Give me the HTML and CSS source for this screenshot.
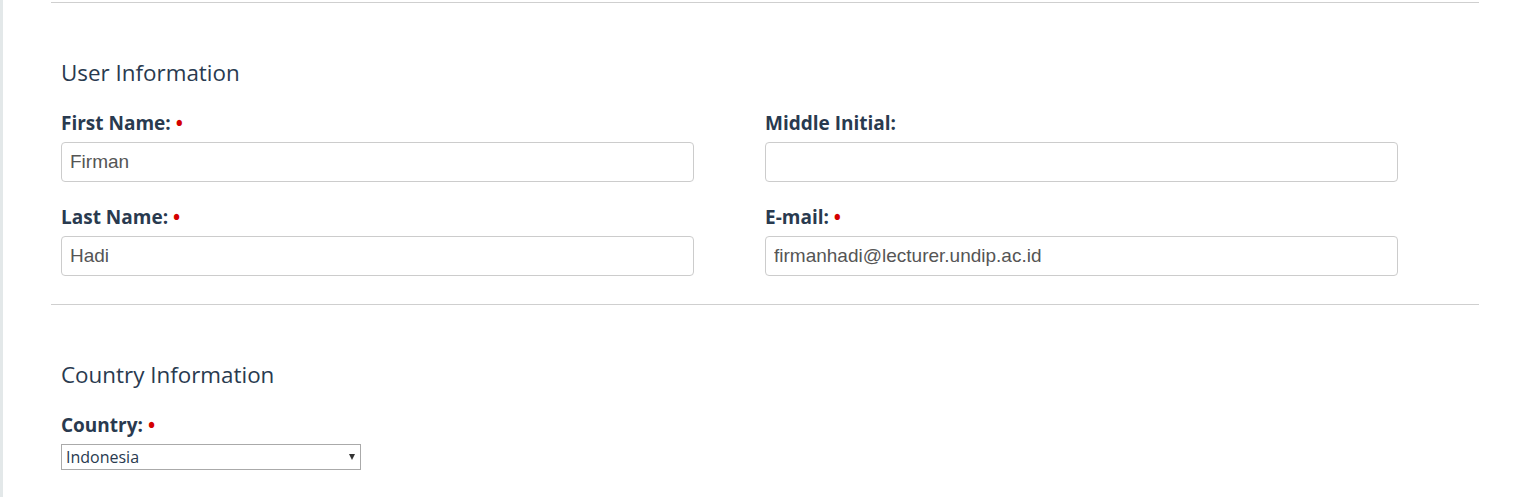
FILE: index.html
```html
<!DOCTYPE html>
<html lang="en">
<head>
<meta charset="utf-8">
<title>User Information</title>
<link rel="stylesheet" href="styles.css">
</head>
<body>
<div class="page">
  <div class="content">
    <section class="panel">
      <h2 class="panel-title">User Information</h2>
      <div class="grid">
        <div class="field">
          <label class="label">First Name: <span class="req">•</span></label>
          <input class="text" type="text" value="Firman">
        </div>
        <div class="field">
          <label class="label">Middle Initial:</label>
          <input class="text" type="text" value="">
        </div>
        <div class="field">
          <label class="label">Last Name: <span class="req">•</span></label>
          <input class="text" type="text" value="Hadi">
        </div>
        <div class="field">
          <label class="label">E-mail: <span class="req">•</span></label>
          <input class="text" type="text" value="firmanhadi@lecturer.undip.ac.id">
        </div>
      </div>
    </section>
    <section class="panel">
      <h2 class="panel-title">Country Information</h2>
      <div class="field">
        <label class="label">Country: <span class="req">•</span></label>
        <div class="select-wrap">
          <select class="select">
            <option>Indonesia</option>
          </select>
        </div>
      </div>
    </section>
  </div>
</div>
</body>
</html>
```

FILE: styles.css
```css
html, body {
  margin: 0;
  padding: 0;
  background: #ffffff;
}

.page {
  border-left: 3px solid #e3e8e9;
  min-height: 497px;
  box-sizing: border-box;
  padding: 2px 47px 0 48px;
  font-family: "Open Sans", "Liberation Sans", sans-serif;
  color: #293a4f;
}

.panel {
  border-top: 1px solid #cfcfcf;
  padding: 55px 10px 28px;
}

.panel-title {
  margin: 0 0 23px;
  font-size: 22.4px;
  line-height: 30px;
  font-weight: 400;
  color: #293a4f;
}

.grid {
  display: grid;
  grid-template-columns: 1fr 1fr;
  row-gap: 23px;
}

.field {
  display: flex;
  flex-direction: column;
  align-items: flex-start;
}

.label {
  font-size: 19px;
  line-height: 25px;
  font-weight: 700;
  margin-bottom: 6px;
  color: #293a4f;
}

.req {
  color: #d40000;
  font-weight: 700;
}

.text {
  box-sizing: border-box;
  width: 633px;
  height: 40px;
  margin: 0;
  padding: 0 8px;
  border: 1px solid #cccccc;
  border-radius: 4px;
  background: #ffffff;
  font-family: "Liberation Sans", Arial, sans-serif;
  font-size: 19px;
  color: #555555;
  outline: none;
}

.select-wrap {
  position: relative;
  width: 300px;
}

.select-wrap::after {
  content: "";
  position: absolute;
  right: 6px;
  top: 10px;
  border-left: 3.5px solid transparent;
  border-right: 3.5px solid transparent;
  border-top: 6px solid #333333;
  pointer-events: none;
}

.select {
  box-sizing: border-box;
  width: 300px;
  height: 26px;
  margin: 0;
  padding: 0 20px 0 4px;
  border: 1px solid #aaaaaa;
  border-radius: 0;
  background: #ffffff;
  -webkit-appearance: none;
  appearance: none;
  font-family: "Open Sans", sans-serif;
  font-size: 16px;
  line-height: 24px;
  color: #293a4f;
}
```
